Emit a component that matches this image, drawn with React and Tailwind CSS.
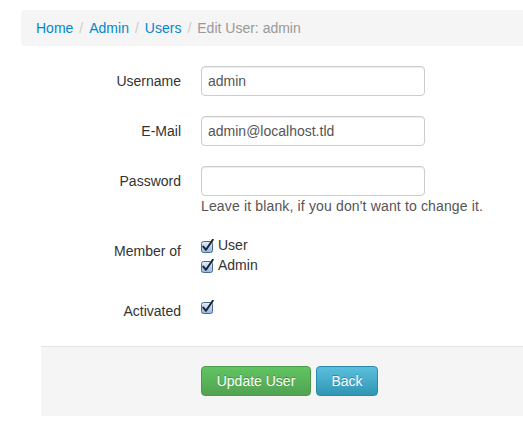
import React from "react";

function Check() {
  return (
    <svg width="14" height="14" viewBox="0 0 14 14" className="block">
      <defs>
        <linearGradient id="cbg" x1="0" y1="0" x2="0" y2="1">
          <stop offset="0" stopColor="#e4eefb" />
          <stop offset="1" stopColor="#8fb6e6" />
        </linearGradient>
      </defs>
      <rect x="0.5" y="2.5" width="11" height="11" rx="2" fill="url(#cbg)" stroke="#4b6a93" />
      <path d="M2.3 7.6 L5 10.8 L11.8 0.8" fill="none" stroke="#1c2430" strokeWidth="2" strokeLinecap="round" strokeLinejoin="round" />
    </svg>
  );
}

function Label({ children }) {
  return (
    <div className="w-[160px] shrink-0 text-right pt-[5px] leading-[20px] text-[#333]">{children}</div>
  );
}

function Input({ value }) {
  return (
    <div className="w-[224px] h-[30px] border border-[#cccccc] rounded-[4px] px-[6px] py-[4px] leading-[20px] text-[#555] shadow-[inset_0_1px_1px_rgba(0,0,0,0.075)] bg-white">
      {value}
    </div>
  );
}

export default function App() {
  return (
    <div className="w-[523px] h-[431px] overflow-hidden bg-white text-[14px] text-[#333]" style={{ fontFamily: '"Liberation Sans", Arial, sans-serif' }}>
      <div className="w-[940px] ml-[21px] pt-[10px]">
        <div className="bg-[#f5f5f5] rounded-[4px] px-[15px] py-[8px] leading-[20px] mb-[20px] flex">
          <span className="text-[#0088cc]">Home</span>
          <span className="text-[#cccccc] px-[6px]">/</span>
          <span className="text-[#0088cc]">Admin</span>
          <span className="text-[#cccccc] px-[6px]">/</span>
          <span className="text-[#0088cc]">Users</span>
          <span className="text-[#cccccc] px-[6px]">/</span>
          <span className="text-[#999999]">Edit User: admin</span>
        </div>

        <div className="flex gap-[20px] mb-[20px]">
          <Label>Username</Label>
          <Input value="admin" />
        </div>
        <div className="flex gap-[20px] mb-[20px]">
          <Label>E-Mail</Label>
          <Input value="admin@localhost.tld" />
        </div>
        <div className="flex gap-[20px] mb-[20px]">
          <Label>Password</Label>
          <div>
            <Input value="" />
            <div className="leading-[20px] text-[#555] tracking-[0.15px]">Leave it blank, if you don't want to change it.</div>
          </div>
        </div>
        <div className="flex gap-[20px] mb-[20px]">
          <Label>Member of</Label>
          <div className="flex flex-col">
            <div className="flex items-center h-[20px] gap-[3px]">
              <Check />
              <span className="leading-[20px] -mt-[2px]">User</span>
            </div>
            <div className="flex items-center h-[20px] gap-[3px]">
              <Check />
              <span className="leading-[20px] -mt-[2px]">Admin</span>
            </div>
          </div>
        </div>
        <div className="flex gap-[20px] h-[50px]">
          <Label>Activated</Label>
          <div className="pt-[4px]">
            <Check />
          </div>
        </div>

        <div className="ml-[20px] bg-[#f5f5f5] border-t border-[#e5e5e5] pt-[19px] pb-[20px] pl-[160px] flex gap-[5px]">
          <button className="h-[30px] w-[110px] rounded-[4px] border border-[#4a9a4a] bg-gradient-to-b from-[#62c462] to-[#51a351] text-white leading-[20px] [text-shadow:0_-1px_0_rgba(0,0,0,0.25)]">
            Update User
          </button>
          <button className="h-[30px] w-[62px] rounded-[4px] border border-[#2a8aa8] bg-gradient-to-b from-[#5bc0de] to-[#2f96b4] text-white leading-[20px] [text-shadow:0_-1px_0_rgba(0,0,0,0.25)]">
            Back
          </button>
        </div>
      </div>
    </div>
  );
}
